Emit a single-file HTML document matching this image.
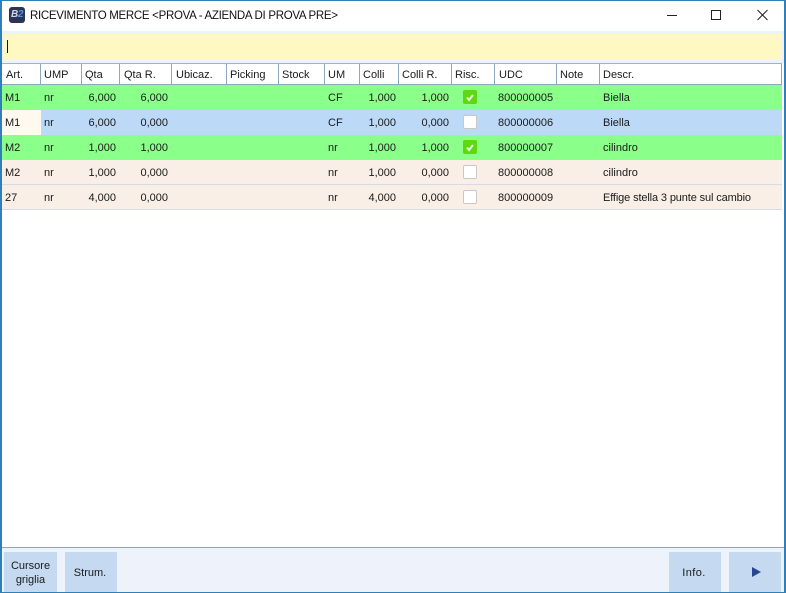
<!DOCTYPE html>
<html><head><meta charset="utf-8">
<style>
html,body{margin:0;padding:0}
body{width:786px;height:593px;overflow:hidden;position:relative;background:#fff;font-family:"Liberation Sans",sans-serif;font-size:11px;color:#1a1a1a}
div,span{position:absolute}
.t{white-space:nowrap;line-height:14px}
.h{top:68px}
.r{text-align:right}
.row{left:2px;width:780px;height:25px}
.cb{left:463px;width:12px;height:12px;border:1px solid #c8c8c8;border-radius:2px;background:#fff}
.cg{left:463px;width:14px;height:14px;border-radius:2px;background:#5fd80f}
.v{top:64px;width:1px;height:20px;background:#8fa6bc}
.btn{background:#c5d9f1;top:552px;height:40px;text-align:center}
</style></head><body>
<div style="left:0;top:31px;width:786px;height:517px;background:#eef2fa"></div>
<div style="left:4px;top:34px;width:778px;height:26px;background:#fef8c3"></div>
<div style="left:7px;top:40px;width:1px;height:13px;background:#111"></div>

<!-- title -->
<div style="left:9px;top:7px;width:16px;height:16px;border-radius:3px;background:#2b3358"></div>
<span class="t" style="left:11px;top:9px;font-size:10px;line-height:12px;font-style:italic;font-weight:bold;color:#cfd6ea;letter-spacing:-.3px">B<span style="position:static;color:#4a9be0">2</span></span>
<span class="t" style="left:30px;top:9px;font-size:11.5px;color:#111;letter-spacing:-.3px">RICEVIMENTO MERCE &lt;PROVA - AZIENDA DI PROVA PRE&gt;</span>
<svg style="position:absolute;left:660px;top:5px" width="120" height="20" fill="none" stroke="#222" stroke-width="1">
<path d="M7 10.500H17"/><path d="M51.500 5.500h9v9h-9z"/><path d="M97.500 5l10 10M107.500 5l-10 10"/></svg>

<!-- grid -->
<div style="left:2px;top:63px;width:782px;height:485px;background:#fff"></div>
<div style="left:2px;top:63px;width:780px;height:1px;background:#9db3c8"></div>
<div style="left:2px;top:84px;width:780px;height:1px;background:#8fa6bc"></div>
<div class="v" style="left:40px"></div><div class="v" style="left:81px"></div><div class="v" style="left:119px"></div><div class="v" style="left:171px"></div><div class="v" style="left:226px"></div><div class="v" style="left:278px"></div><div class="v" style="left:324px"></div><div class="v" style="left:359px"></div><div class="v" style="left:398px"></div><div class="v" style="left:451px"></div><div class="v" style="left:494px"></div><div class="v" style="left:556px"></div><div class="v" style="left:599px"></div><div class="v" style="left:781px"></div>
<span class="t h" style="left:6px">Art.</span><span class="t h" style="left:44px">UMP</span><span class="t h" style="left:85px">Qta</span><span class="t h" style="left:124px">Qta R.</span><span class="t h" style="left:176px">Ubicaz.</span><span class="t h" style="left:230px">Picking</span><span class="t h" style="left:282px">Stock</span><span class="t h" style="left:328px">UM</span><span class="t h" style="left:363px">Colli</span><span class="t h" style="left:402px">Colli R.</span><span class="t h" style="left:455px">Risc.</span><span class="t h" style="left:499px">UDC</span><span class="t h" style="left:560px">Note</span><span class="t h" style="left:603px">Descr.</span>

<div class="row" style="top:85px;background:#8aff8a"></div>
<div class="row" style="top:110px;background:#bcd9f7"></div>
<div style="left:2px;top:110px;width:39px;height:25px;background:#fff9f0"></div>
<div class="row" style="top:135px;background:#8aff8a"></div>
<div class="row" style="top:160px;height:24px;background:#f9efe6"></div>
<div class="row" style="top:184px;height:1px;background:#d5dce8"></div>
<div class="row" style="top:185px;height:24px;background:#f9efe6"></div>
<div class="row" style="top:209px;height:1px;background:#d5dce8"></div>

<!-- row 1 -->
<span class="t" style="left:5px;top:91px">M1</span><span class="t" style="left:44px;top:91px">nr</span><span class="t r" style="right:670px;top:91px">6,000</span><span class="t r" style="right:618px;top:91px">6,000</span><span class="t" style="left:328px;top:91px">CF</span><span class="t r" style="right:390px;top:91px">1,000</span><span class="t r" style="right:337px;top:91px">1,000</span><span class="t" style="left:498px;top:91px">800000005</span><span class="t" style="left:603px;top:91px">Biella</span>
<!-- row 2 -->
<span class="t" style="left:5px;top:116px">M1</span><span class="t" style="left:44px;top:116px">nr</span><span class="t r" style="right:670px;top:116px">6,000</span><span class="t r" style="right:618px;top:116px">0,000</span><span class="t" style="left:328px;top:116px">CF</span><span class="t r" style="right:390px;top:116px">1,000</span><span class="t r" style="right:337px;top:116px">0,000</span><span class="t" style="left:498px;top:116px">800000006</span><span class="t" style="left:603px;top:116px">Biella</span>
<!-- row 3 -->
<span class="t" style="left:5px;top:141px">M2</span><span class="t" style="left:44px;top:141px">nr</span><span class="t r" style="right:670px;top:141px">1,000</span><span class="t r" style="right:618px;top:141px">1,000</span><span class="t" style="left:328px;top:141px">nr</span><span class="t r" style="right:390px;top:141px">1,000</span><span class="t r" style="right:337px;top:141px">1,000</span><span class="t" style="left:498px;top:141px">800000007</span><span class="t" style="left:603px;top:141px">cilindro</span>
<!-- row 4 -->
<span class="t" style="left:5px;top:166px">M2</span><span class="t" style="left:44px;top:166px">nr</span><span class="t r" style="right:670px;top:166px">1,000</span><span class="t r" style="right:618px;top:166px">0,000</span><span class="t" style="left:328px;top:166px">nr</span><span class="t r" style="right:390px;top:166px">1,000</span><span class="t r" style="right:337px;top:166px">0,000</span><span class="t" style="left:498px;top:166px">800000008</span><span class="t" style="left:603px;top:166px">cilindro</span>
<!-- row 5 -->
<span class="t" style="left:5px;top:191px">27</span><span class="t" style="left:44px;top:191px">nr</span><span class="t r" style="right:670px;top:191px">4,000</span><span class="t r" style="right:618px;top:191px">0,000</span><span class="t" style="left:328px;top:191px">nr</span><span class="t r" style="right:390px;top:191px">4,000</span><span class="t r" style="right:337px;top:191px">0,000</span><span class="t" style="left:498px;top:191px">800000009</span><span class="t" style="left:603px;top:191px;letter-spacing:-.13px">Effige stella 3 punte sul cambio</span>

<!-- checkboxes -->
<div class="cg" style="top:90px"></div>
<svg style="position:absolute;left:463px;top:90px" width="14" height="14" fill="none" stroke="#e8ffe0" stroke-width="2"><path d="M4 7.500l2 2.500 4-5"/></svg>
<div class="cb" style="top:115px"></div>
<div class="cg" style="top:140px"></div>
<svg style="position:absolute;left:463px;top:140px" width="14" height="14" fill="none" stroke="#e8ffe0" stroke-width="2"><path d="M4 7.500l2 2.500 4-5"/></svg>
<div class="cb" style="top:165px"></div>
<div class="cb" style="top:190px"></div>

<!-- bottom -->
<div style="left:0;top:547px;width:786px;height:1px;background:#8fa6bc"></div>
<div style="left:0;top:548px;width:786px;height:45px;background:#eef2fa"></div>
<div class="btn" style="left:4px;width:53px"></div>
<div class="btn" style="left:65px;width:52px"></div>
<div class="btn" style="left:669px;width:52px"></div>
<div class="btn" style="left:729px;width:52px"></div>
<span class="t" style="left:4px;width:53px;top:559px;line-height:14px;text-align:center">Cursore<br>griglia</span>
<span class="t" style="left:64px;width:52px;top:566px;text-align:center">Strum.</span>
<span class="t" style="left:669px;width:50px;top:566px;text-align:center;letter-spacing:.4px">Info.</span>
<svg style="position:absolute;left:752px;top:566px" width="10" height="12"><path d="M0 1L9 6L0 11Z" fill="#24478f"/></svg>

<!-- window border -->
<div style="left:0;top:0;width:786px;height:1px;background:#2f7fb8"></div>
<div style="left:0;top:0;width:2px;height:593px;background:#2f7fb8"></div>
<div style="left:784px;top:0;width:2px;height:593px;background:#2f7fb8"></div>
<div style="left:0;top:592px;width:786px;height:1px;background:#2f7fb8"></div>
</body></html>
